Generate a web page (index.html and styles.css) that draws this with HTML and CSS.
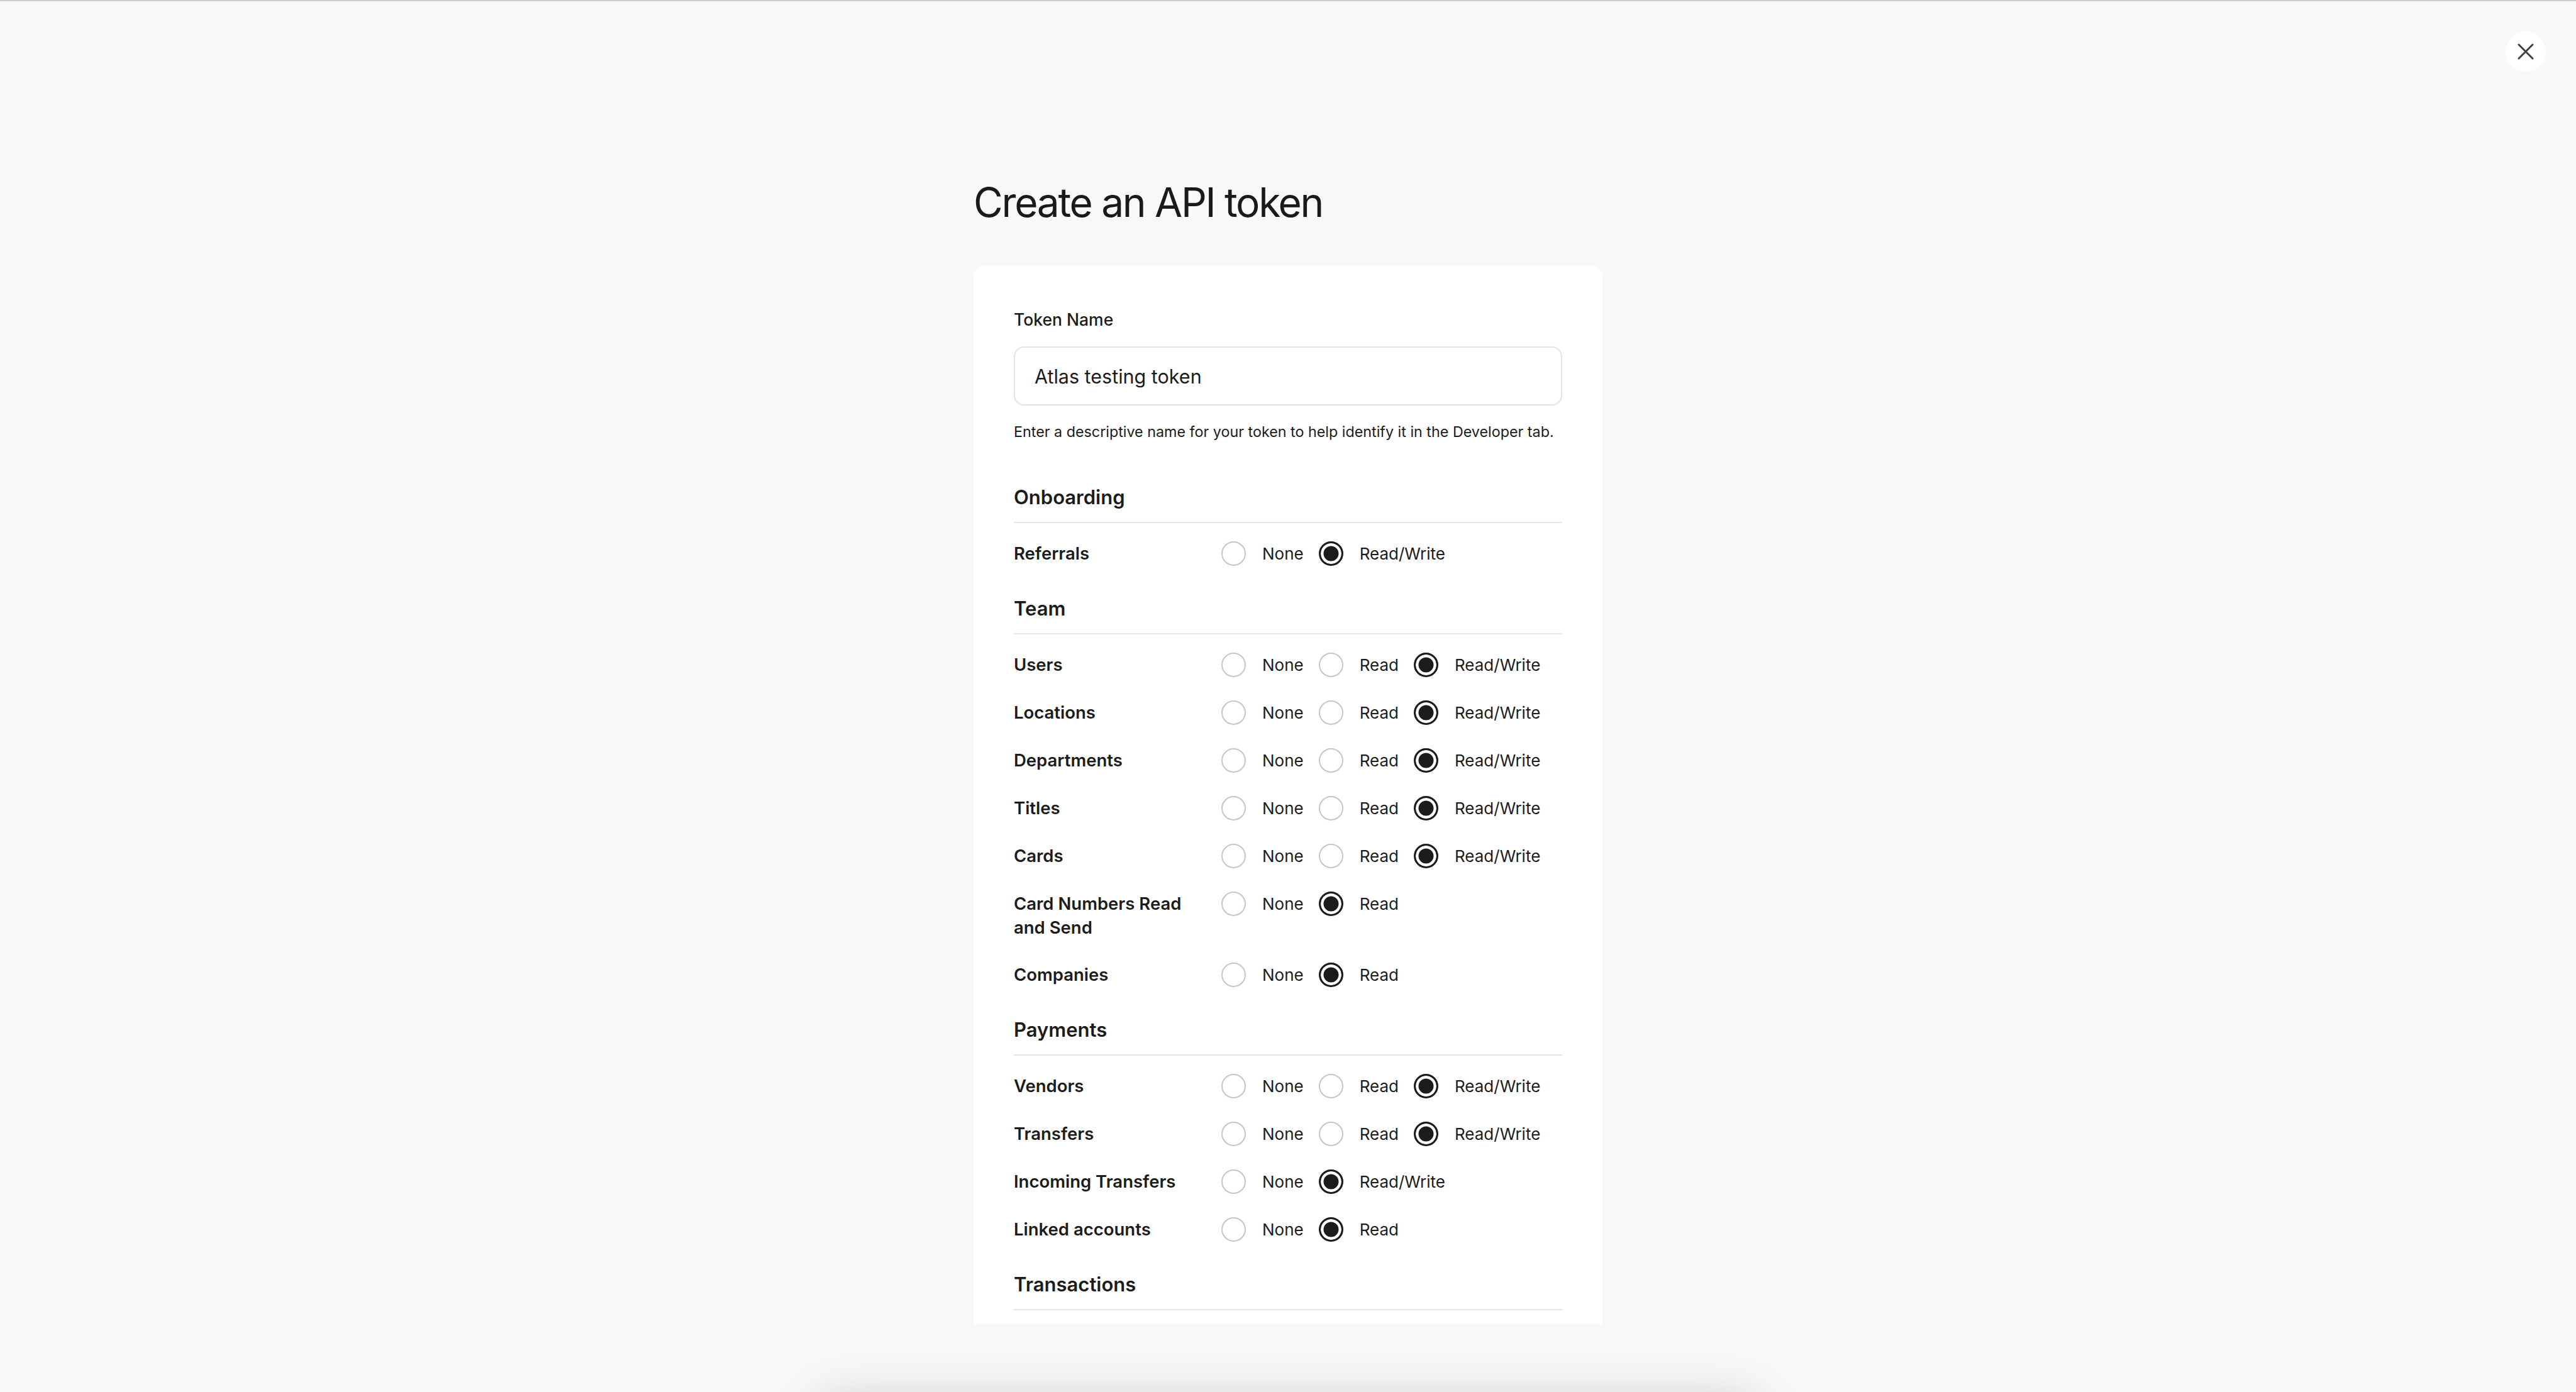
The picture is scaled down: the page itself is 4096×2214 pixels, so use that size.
FILE: index.html
```html
<!DOCTYPE html>
<html lang="en">
<head>
<meta charset="utf-8">
<title>Create an API token</title>
<link rel="stylesheet" href="styles.css">
</head>
<body>
<button class="close-btn" aria-label="Close">
  <svg width="26" height="26" viewBox="0 0 26 26"><path d="M2 2 L24 24 M24 2 L2 24" stroke="#3f3f3f" stroke-width="3" stroke-linecap="round" fill="none"/></svg>
</button>
<main class="viewport">
  <div class="page">
    <h1 class="title">Create an API token</h1>
    <section class="card">
      <div class="field">
        <label class="field-label" for="tokenName">Token Name</label>
        <input class="text-input" id="tokenName" type="text" value="Atlas testing token">
        <p class="hint">Enter a descriptive name for your token to help identify it in the Developer tab.</p>
      </div>

      <div class="group">
        <h2 class="group-title">Onboarding</h2>
        <div class="rows">
          <div class="row"><span class="row-label">Referrals</span><div class="opts">
            <label class="opt"><input type="radio" name="referrals"><span>None</span></label>
            <label class="opt"><input type="radio" name="referrals" checked><span>Read/Write</span></label>
          </div></div>
        </div>
      </div>

      <div class="group">
        <h2 class="group-title">Team</h2>
        <div class="rows">
          <div class="row"><span class="row-label">Users</span><div class="opts">
            <label class="opt"><input type="radio" name="users"><span>None</span></label>
            <label class="opt"><input type="radio" name="users"><span>Read</span></label>
            <label class="opt"><input type="radio" name="users" checked><span>Read/Write</span></label>
          </div></div>
          <div class="row"><span class="row-label">Locations</span><div class="opts">
            <label class="opt"><input type="radio" name="locations"><span>None</span></label>
            <label class="opt"><input type="radio" name="locations"><span>Read</span></label>
            <label class="opt"><input type="radio" name="locations" checked><span>Read/Write</span></label>
          </div></div>
          <div class="row"><span class="row-label">Departments</span><div class="opts">
            <label class="opt"><input type="radio" name="departments"><span>None</span></label>
            <label class="opt"><input type="radio" name="departments"><span>Read</span></label>
            <label class="opt"><input type="radio" name="departments" checked><span>Read/Write</span></label>
          </div></div>
          <div class="row"><span class="row-label">Titles</span><div class="opts">
            <label class="opt"><input type="radio" name="titles"><span>None</span></label>
            <label class="opt"><input type="radio" name="titles"><span>Read</span></label>
            <label class="opt"><input type="radio" name="titles" checked><span>Read/Write</span></label>
          </div></div>
          <div class="row"><span class="row-label">Cards</span><div class="opts">
            <label class="opt"><input type="radio" name="cards"><span>None</span></label>
            <label class="opt"><input type="radio" name="cards"><span>Read</span></label>
            <label class="opt"><input type="radio" name="cards" checked><span>Read/Write</span></label>
          </div></div>
          <div class="row"><span class="row-label">Card Numbers Read and Send</span><div class="opts">
            <label class="opt"><input type="radio" name="cardnumbers"><span>None</span></label>
            <label class="opt"><input type="radio" name="cardnumbers" checked><span>Read</span></label>
          </div></div>
          <div class="row"><span class="row-label">Companies</span><div class="opts">
            <label class="opt"><input type="radio" name="companies"><span>None</span></label>
            <label class="opt"><input type="radio" name="companies" checked><span>Read</span></label>
          </div></div>
        </div>
      </div>

      <div class="group">
        <h2 class="group-title">Payments</h2>
        <div class="rows">
          <div class="row"><span class="row-label">Vendors</span><div class="opts">
            <label class="opt"><input type="radio" name="vendors"><span>None</span></label>
            <label class="opt"><input type="radio" name="vendors"><span>Read</span></label>
            <label class="opt"><input type="radio" name="vendors" checked><span>Read/Write</span></label>
          </div></div>
          <div class="row"><span class="row-label">Transfers</span><div class="opts">
            <label class="opt"><input type="radio" name="transfers"><span>None</span></label>
            <label class="opt"><input type="radio" name="transfers"><span>Read</span></label>
            <label class="opt"><input type="radio" name="transfers" checked><span>Read/Write</span></label>
          </div></div>
          <div class="row"><span class="row-label">Incoming Transfers</span><div class="opts">
            <label class="opt"><input type="radio" name="incoming"><span>None</span></label>
            <label class="opt"><input type="radio" name="incoming" checked><span>Read/Write</span></label>
          </div></div>
          <div class="row"><span class="row-label">Linked accounts</span><div class="opts">
            <label class="opt"><input type="radio" name="linked"><span>None</span></label>
            <label class="opt"><input type="radio" name="linked" checked><span>Read</span></label>
          </div></div>
        </div>
      </div>

      <div class="group">
        <h2 class="group-title">Transactions</h2>
      </div>
    </section>
  </div>
</main>
<div class="footer-bar"></div>
</body>
</html>
```
FILE: styles.css
```css
* { box-sizing: border-box; }
html, body { margin: 0; padding: 0; }
body {
  background: #f8f8f8;
  border-top: 2px solid #cbcbcb;
  height: 100vh;
  overflow: hidden;
  font-family: Inter, "Noto Sans", sans-serif;
  color: #1c1c1c;
}
.viewport {
  height: 2104px;
  overflow: hidden;
}
.page {
  width: 1000px;
  margin: 0 auto;
  padding-top: 281px;
}
.title {
  margin: 0 0 62px;
  font-size: 64px;
  line-height: 77px;
  font-weight: 400;
  letter-spacing: -2.3px;
  color: #1a1a1a;
}
.card {
  background: #fff;
  border-radius: 18px;
  padding: 70px 64px 400px;
}
.field-label {
  display: block;
  font-size: 26.5px;
  line-height: 32px;
  font-weight: 500;
  margin-bottom: 27px;
}
.text-input {
  display: block;
  width: 100%;
  height: 94px;
  border: 2px solid #e3e3e3;
  border-radius: 16px;
  padding: 0 31px;
  font-family: inherit;
  font-size: 30.5px;
  color: #1c1c1c;
  background: #fff;
  outline: none;
}
.hint {
  margin: 28px 0 0;
  font-size: 23.3px;
  line-height: 28px;
}
.group { margin-top: 50px; }
.field + .group { margin-top: 72px; }
.group-title {
  margin: 0;
  font-size: 31px;
  line-height: 36px;
  font-weight: 600;
  padding-bottom: 21px;
  border-bottom: 2px solid #e5e5e5;
}
.rows {
  display: flex;
  flex-direction: column;
  gap: 37px;
  padding-top: 29px;
}
.row {
  display: flex;
  align-items: flex-start;
}
.row-label {
  flex: none;
  width: 290px;
  margin-right: 40px;
  font-size: 27.5px;
  line-height: 38px;
  font-weight: 600;
}
.opts {
  display: flex;
  align-items: center;
  gap: 24px;
}
.opt {
  display: flex;
  align-items: center;
  gap: 26px;
  font-size: 26px;
  line-height: 39px;
}
.opt input {
  appearance: none;
  -webkit-appearance: none;
  margin: 0;
  width: 39px;
  height: 39px;
  border-radius: 50%;
  border: 2px solid #c6c6c6;
  background: #fff;
  flex: none;
}
.opt input:checked {
  border: 3px solid #1c1c1c;
  background: #1c1c1c;
  box-shadow: inset 0 0 0 4.5px #fff;
}
.close-btn {
  position: absolute;
  top: 50px;
  right: 48px;
  width: 64px;
  height: 64px;
  border: none;
  border-radius: 50%;
  background: #fff;
  padding: 0;
  display: flex;
  align-items: center;
  justify-content: center;
}
.footer-bar {
  position: fixed;
  top: 2232px;
  left: 50%;
  width: 1500px;
  height: 200px;
  margin-left: -750px;
  border-radius: 40px;
  background: #fff;
  box-shadow: 0 0 80px rgba(0, 0, 0, 0.22);
}
```
